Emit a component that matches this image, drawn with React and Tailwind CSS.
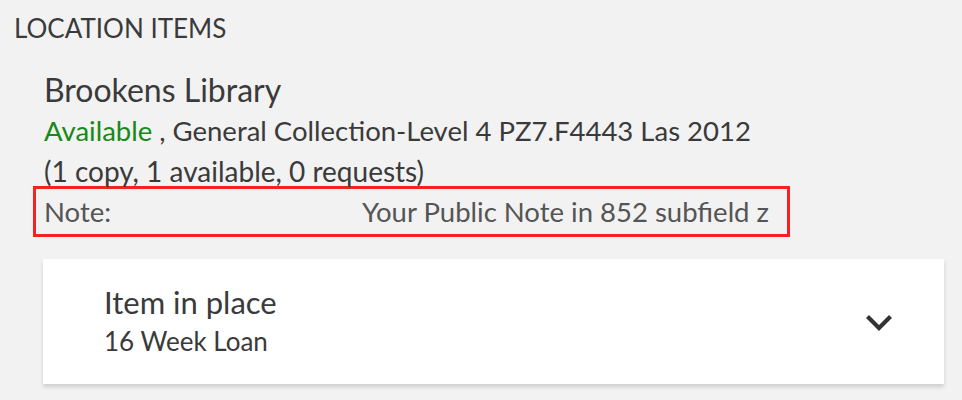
export default function App() {
  return (
    <div className="w-[962px] h-[400px] bg-[#f2f2f2] overflow-hidden text-[#3a3a3a]" style={{ fontFamily: 'Lato, "Open Sans", sans-serif' }}>
      <div className="pl-[14px] pt-[8px] h-[46px] leading-[40px] text-[26px] text-[#3a3a3a]">LOCATION ITEMS</div>
      <div className="pl-[44px] pt-[24px]">
        <div className="h-[41px] leading-[40px] text-[32px]">Brookens Library</div>
        <div className="h-[43px] leading-[40px] text-[27.5px]">
          <span className="text-[#178a17]">Available</span> , General Collection-Level 4 PZ7.F4443 Las 2012
        </div>
        <div className="h-[32px] leading-[34px] text-[28px]">(1 copy, 1 available, 0 requests)</div>
      </div>
      <div className="ml-[33px] w-[757px] h-[51px] border-[3px] border-[#f52222] flex items-center justify-between pl-[8px] pr-[18px] text-[27.5px] text-[#555555]">
        <span>Note:</span>
        <span>Your Public Note in 852 subfield z</span>
      </div>
      <div className="mt-[22px] ml-[43px] w-[901px] h-[125px] bg-white shadow-[0_3px_4px_rgba(0,0,0,0.15)] flex items-center justify-between pl-[61px] pr-[51px]">
        <div className="-mt-[4px]">
          <div className="h-[42px] leading-[42px] text-[31px]">Item in place</div>
          <div className="h-[36px] leading-[36px] text-[26px]">16 Week Loan</div>
        </div>
        <svg width="28" height="18" viewBox="0 0 28 18" fill="none" className="mt-[2px]">
          <path d="M2.5 2.5 L14 14 L25.5 2.5" stroke="#333" strokeWidth="4.2" />
        </svg>
      </div>
    </div>
  );
}
